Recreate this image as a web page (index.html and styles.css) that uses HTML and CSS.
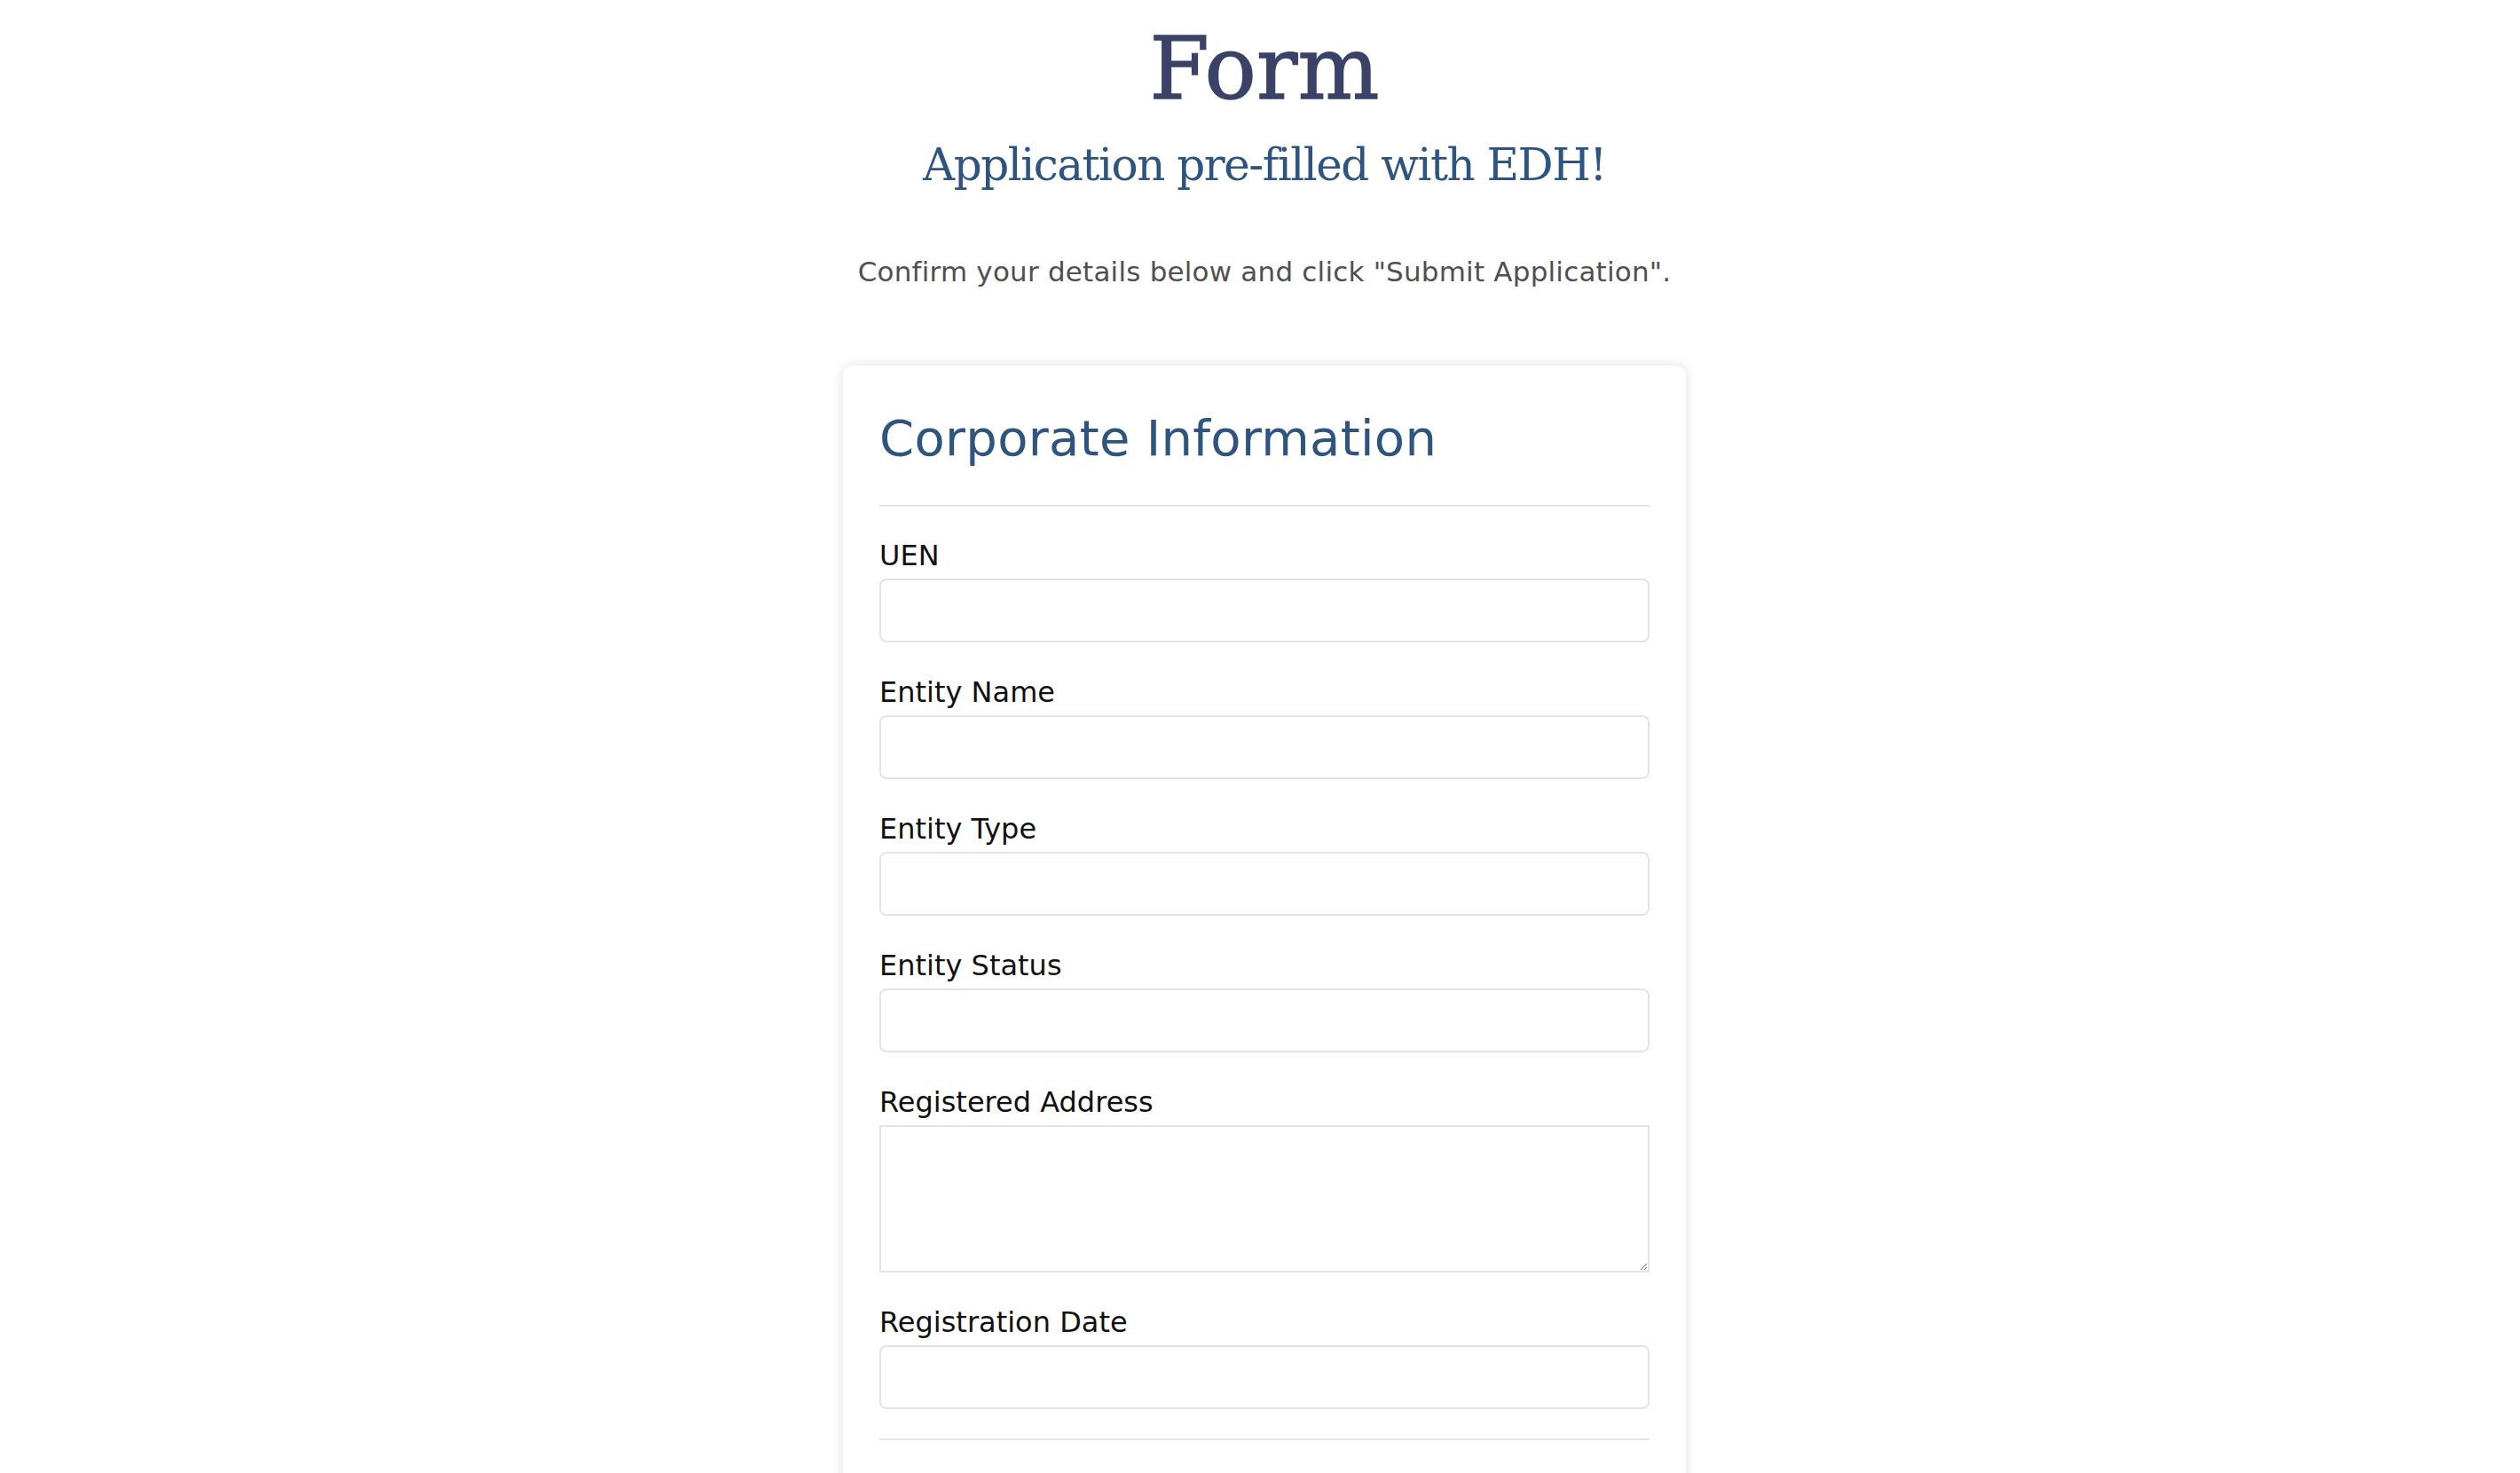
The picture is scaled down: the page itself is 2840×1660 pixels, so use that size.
FILE: index.html
```html
<!DOCTYPE html>
<html lang="en">
<head>
<meta charset="utf-8">
<title>Form</title>
<link rel="stylesheet" href="styles.css">
</head>
<body>
<main class="page">
  <header class="intro">
    <h1 class="title">Form</h1>
    <h2 class="subtitle">Application pre-filled with EDH!</h2>
    <p class="lead">Confirm your details below and click "Submit Application".</p>
  </header>
  <section class="card">
    <h3 class="card-title">Corporate Information</h3>
    <hr class="divider">
    <div class="fields">
      <div class="field">
        <label class="field-label" for="uen">UEN</label>
        <input class="field-input" id="uen" type="text">
      </div>
      <div class="field">
        <label class="field-label" for="entity-name">Entity Name</label>
        <input class="field-input" id="entity-name" type="text">
      </div>
      <div class="field">
        <label class="field-label" for="entity-type">Entity Type</label>
        <input class="field-input" id="entity-type" type="text">
      </div>
      <div class="field">
        <label class="field-label" for="entity-status">Entity Status</label>
        <input class="field-input" id="entity-status" type="text">
      </div>
      <div class="field">
        <label class="field-label" for="registered-address">Registered Address</label>
        <textarea class="field-input field-area" id="registered-address"></textarea>
      </div>
      <div class="field">
        <label class="field-label" for="registration-date">Registration Date</label>
        <input class="field-input" id="registration-date" type="text">
      </div>
    </div>
    <hr class="divider divider-end">
  </section>
</main>
</body>
</html>
```
FILE: styles.css
```css
html, body {
  margin: 0;
  padding: 0;
  background: #ffffff;
}

body {
  font-family: "DejaVu Sans", sans-serif;
  overflow: hidden;
}

.page {
  display: flex;
  flex-direction: column;
  align-items: center;
  padding-left: 10px;
}

.intro {
  display: flex;
  flex-direction: column;
  align-items: center;
}

.title {
  margin: 28.6px 0 0;
  font-family: "DejaVu Serif", serif;
  font-weight: 400;
  font-size: 97px;
  line-height: 1;
  color: #3b4268;
  -webkit-text-stroke: 1.4px #3b4268;
}

.subtitle {
  margin: 35.5px 0 0;
  font-family: "DejaVu Serif", serif;
  font-weight: 400;
  font-size: 50px;
  line-height: 1;
  letter-spacing: -1.5px;
  color: #2e5482;
}

.lead {
  margin: 79.8px 0 0;
  font-family: "DejaVu Sans", sans-serif;
  font-size: 31px;
  line-height: 1;
  letter-spacing: 0.2px;
  color: #505050;
}

.card {
  margin-top: 90.5px;
  width: 950px;
  box-sizing: border-box;
  padding: 53.4px 41px 80px;
  background: #ffffff;
  border-radius: 12px;
  box-shadow: 0 0 14px rgba(0, 0, 0, 0.13);
}

.card-title {
  margin: 0;
  font-family: "DejaVu Sans", sans-serif;
  font-weight: 400;
  font-size: 56px;
  line-height: 1;
  letter-spacing: 0.3px;
  color: #2f5480;
}

.divider {
  margin: 47px 0 39px;
  border: 0;
  height: 2px;
  background: #e6e6e6;
}

.divider-end {
  margin: 33px 0 0;
}

.fields {
  display: flex;
  flex-direction: column;
  gap: 40px;
}

.field-label {
  display: block;
  margin-bottom: 10px;
  font-size: 32px;
  line-height: 32px;
  color: #111111;
}

.field-input {
  display: block;
  width: 100%;
  box-sizing: border-box;
  height: 72px;
  margin: 0;
  padding: 0 16px;
  border: 2px solid #e4e4e4;
  border-radius: 8px;
  background: #ffffff;
  font: inherit;
  font-size: 28px;
  outline: none;
}

.field-area {
  height: 166px;
  border-radius: 0;
  resize: vertical;
}
```
